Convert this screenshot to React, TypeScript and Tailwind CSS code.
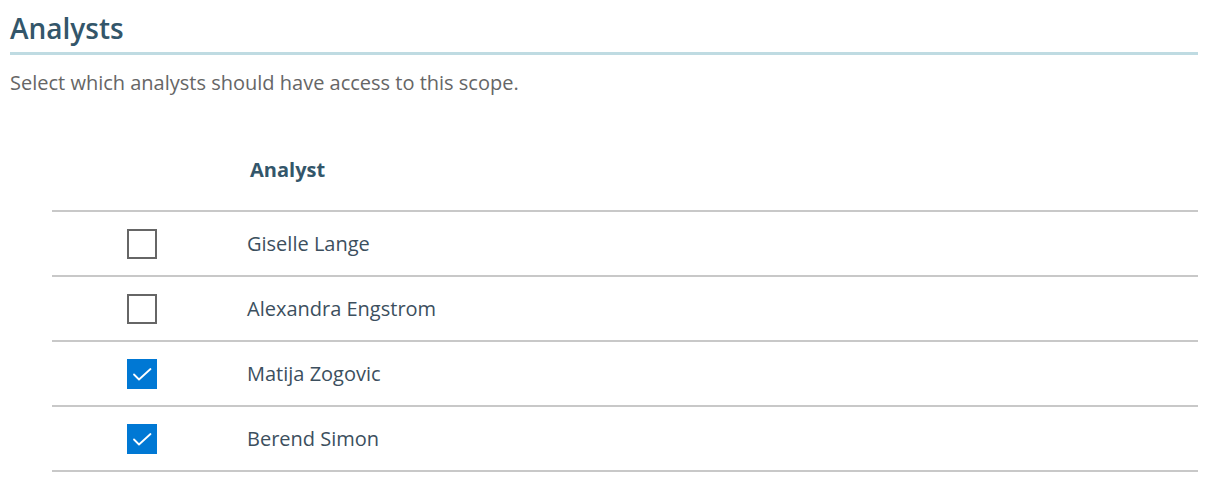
import * as React from 'react'

interface Analyst {
  id: string
  name: string
  checked: boolean
}

const analysts: Analyst[] = [
  { id: 'giselle', name: 'Giselle Lange', checked: false },
  { id: 'alexandra', name: 'Alexandra Engstrom', checked: false },
  { id: 'matija', name: 'Matija Zogovic', checked: true },
  { id: 'berend', name: 'Berend Simon', checked: true },
]

function CheckBox({ checked }: { checked: boolean }) {
  if (checked) {
    return (
      <span className="block size-[30px] bg-[#0078d4]">
        <svg viewBox="0 0 30 30" className="size-[30px]" fill="none">
          <path d="M7 15.5 L12 20.5 L23.5 10" stroke="white" strokeWidth="1.8" strokeLinecap="round" strokeLinejoin="round" />
        </svg>
      </span>
    )
  }
  return <span className="block size-[30px] border-2 border-[#666666] bg-white" />
}

export default function App() {
  const [rows, setRows] = React.useState(analysts)

  return (
    <div className="min-h-[492px] w-full bg-white pl-[10px] pr-[15px] pt-[10px] font-['Open_Sans','Noto_Sans',sans-serif]">
      <h2 className="border-b-[3px] border-[#bfdbe2] pb-[6px] text-[28px] leading-[36px] font-semibold text-[#33566a]">
        Analysts
      </h2>
      <p className="mt-[15px] text-[20px] leading-[26px] text-[#666666]">
        Select which analysts should have access to this scope.
      </p>

      <table className="mt-[40px] ml-[42px] w-[calc(100%-42px)] border-collapse">
        <thead>
          <tr className="border-b-2 border-[#c8c8c8]">
            <th className="w-[180px]" />
            <th className="h-[75px] pl-[18px] pb-[6px] text-left text-[20px] font-bold text-[#33566a]">Analyst</th>
          </tr>
        </thead>
        <tbody>
          {rows.map((row) => (
            <tr key={row.id} className="h-[65px] border-b-2 border-[#c8c8c8]">
              <td className="w-[180px]">
                <button
                  type="button"
                  className="mx-auto flex"
                  onClick={() =>
                    setRows((prev) => prev.map((r) => (r.id === row.id ? { ...r, checked: !r.checked } : r)))
                  }
                >
                  <CheckBox checked={row.checked} />
                </button>
              </td>
              <td className="pl-[15px] text-[20px] text-[#3c4f5e]">{row.name}</td>
            </tr>
          ))}
        </tbody>
      </table>
    </div>
  )
}
